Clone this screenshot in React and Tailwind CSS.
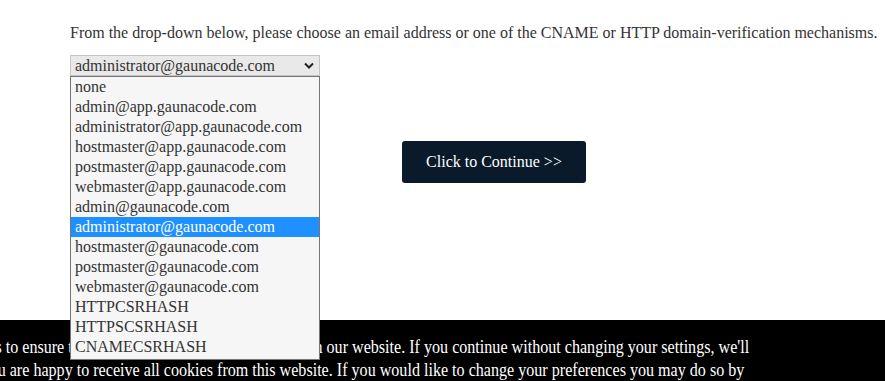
import React from 'react';

const options = [
  'none',
  'admin@app.gaunacode.com',
  'administrator@app.gaunacode.com',
  'hostmaster@app.gaunacode.com',
  'postmaster@app.gaunacode.com',
  'webmaster@app.gaunacode.com',
  'admin@gaunacode.com',
  'administrator@gaunacode.com',
  'hostmaster@gaunacode.com',
  'postmaster@gaunacode.com',
  'webmaster@gaunacode.com',
  'HTTPCSRHASH',
  'HTTPSCSRHASH',
  'CNAMECSRHASH',
];

const selected = 'administrator@gaunacode.com';

const App = () => {
  return (
    <div
      className="relative h-[381px] w-[885px] overflow-hidden bg-white text-[16px] text-[#333]"
      style={{ fontFamily: '"Liberation Serif", serif' }}
    >
      <div className="pl-[70px] pt-[24px]">
        <p className="leading-[18px]">
          From the drop-down below, please choose an email address or one of the CNAME or HTTP domain-verification mechanisms.
        </p>

        {/* closed select with its open list over the page */}
        <div className="relative mt-[13px] w-[250px]">
          <div className="flex h-[21px] items-center justify-between border border-[#c4c4c4] bg-[#e9e9e9] pl-[4px] pr-[4px] leading-[19px] text-[#333]">
            <span>{selected}</span>
            <svg width="10" height="7" viewBox="0 0 10 7" className="mr-[1px]">
              <path d="M1 1.5 L5 5.5 L9 1.5" fill="none" stroke="#222" strokeWidth="2" />
            </svg>
          </div>
          <ul className="absolute left-0 top-[21px] z-20 w-[250px] border border-[#767676] bg-[#f6f6f6] pb-[2px]">
            {options.map((o) => (
              <li
                key={o}
                className={`h-[20px] pl-[4px] leading-[20px] ${
                  o === selected ? 'bg-[#1e90ff] text-white' : 'text-[#333]'
                }`}
              >
                {o}
              </li>
            ))}
          </ul>
        </div>

        <div className="ml-[332px] mt-[65px]">
          <button className="h-[42px] w-[184px] rounded-[3px] bg-[#0a1a2a] text-[16px] text-white">
            Click to Continue &gt;&gt;
          </button>
        </div>
      </div>

      {/* cookie notice */}
      <div className="absolute left-0 top-[320px] z-10 h-[80px] w-full overflow-hidden bg-black pt-[16px] text-white">
        <p className="ml-[-98px] origin-left scale-x-[0.894] whitespace-nowrap text-[18px] leading-[23px]">
          We use cookies to ensure that we give you the best experience on our website. If you continue without changing your settings, we'll
          <br />
          assume that you are happy to receive all cookies from this website. If you would like to change your preferences you may do so by
        </p>
      </div>
    </div>
  );
};

export default App;
